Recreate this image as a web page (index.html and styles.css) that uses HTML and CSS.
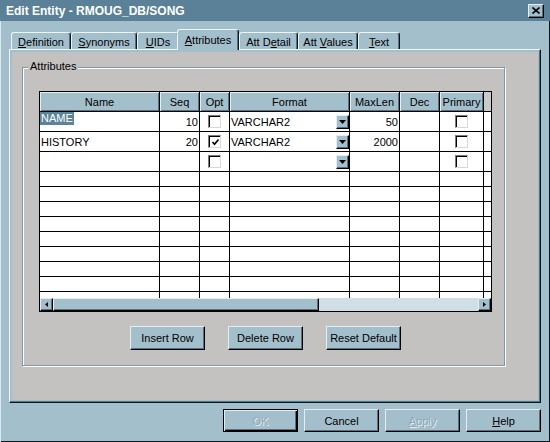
FILE: index.html
```html
<!DOCTYPE html>
<html>
<head>
<meta charset="utf-8">
<title>Edit Entity</title>
<link rel="stylesheet" href="styles.css">
</head>
<body>
<div class="window">
  <div class="titlebar">
    <span class="title">Edit Entity - RMOUG_DB/SONG</span>
    <div class="close"><svg width="8" height="7" viewBox="0 0 8 7"><path d="M0.5 0.5 L7.5 6.5 M7.5 0.5 L0.5 6.5" stroke="#000" stroke-width="1.6" fill="none"/></svg></div>
  </div>
  <div class="body">
    <div class="tabs">
      <div class="tab t-def"><span><u>D</u>efinition</span></div>
      <div class="tab t-syn"><span><u>S</u>ynonyms</span></div>
      <div class="tab t-uid"><span><u>U</u>IDs</span></div>
      <div class="tab t-att active"><span><u>A</u>ttributes</span></div>
      <div class="tab t-det"><span>Att D<u>e</u>tail</span></div>
      <div class="tab t-val"><span>Att <u>V</u>alues</span></div>
      <div class="tab t-txt"><span><u>T</u>ext</span></div>
    </div>
    <div class="panel">
      <div class="page">
        <div class="group">
          <span class="group-label">Attributes</span>
          <div class="grid-frame">
            <div class="grid-clip">
              <div class="grid">
                <div class="hd">Name</div><div class="hd">Seq</div><div class="hd">Opt</div><div class="hd">Format</div><div class="hd">MaxLen</div><div class="hd">Dec</div><div class="hd">Primary</div><div class="hd-fill"></div>

                <div class="c c-name c-edit"><span class="sel">NAME</span></div><div class="c num">10</div><div class="c mid"><span class="cb"></span></div><div class="c fmt"><span>VARCHAR2</span><span class="dd"><svg width="7" height="4" viewBox="0 0 7 4"><path d="M0 0 H7 L3.5 4 Z" fill="#000"/></svg></span></div><div class="c num">50</div><div class="c"></div><div class="c mid"><span class="cb"></span></div><div class="c"></div>

                <div class="c c-name">HISTORY</div><div class="c num">20</div><div class="c mid"><span class="cb"><svg width="9" height="9" viewBox="0 0 9 9"><path d="M1.5 4 L3.5 6.2 L7.5 1.5" stroke="#000" stroke-width="1.7" fill="none"/></svg></span></div><div class="c fmt"><span>VARCHAR2</span><span class="dd"><svg width="7" height="4" viewBox="0 0 7 4"><path d="M0 0 H7 L3.5 4 Z" fill="#000"/></svg></span></div><div class="c num">2000</div><div class="c"></div><div class="c mid"><span class="cb"></span></div><div class="c"></div>

                <div class="c"></div><div class="c"></div><div class="c mid"><span class="cb"></span></div><div class="c fmt"><span></span><span class="dd"><svg width="7" height="4" viewBox="0 0 7 4"><path d="M0 0 H7 L3.5 4 Z" fill="#000"/></svg></span></div><div class="c"></div><div class="c"></div><div class="c mid"><span class="cb"></span></div><div class="c"></div>

                <div class="c"></div><div class="c"></div><div class="c"></div><div class="c"></div><div class="c"></div><div class="c"></div><div class="c"></div><div class="c"></div>
                <div class="c"></div><div class="c"></div><div class="c"></div><div class="c"></div><div class="c"></div><div class="c"></div><div class="c"></div><div class="c"></div>
                <div class="c"></div><div class="c"></div><div class="c"></div><div class="c"></div><div class="c"></div><div class="c"></div><div class="c"></div><div class="c"></div>
                <div class="c"></div><div class="c"></div><div class="c"></div><div class="c"></div><div class="c"></div><div class="c"></div><div class="c"></div><div class="c"></div>
                <div class="c"></div><div class="c"></div><div class="c"></div><div class="c"></div><div class="c"></div><div class="c"></div><div class="c"></div><div class="c"></div>
                <div class="c"></div><div class="c"></div><div class="c"></div><div class="c"></div><div class="c"></div><div class="c"></div><div class="c"></div><div class="c"></div>
                <div class="c"></div><div class="c"></div><div class="c"></div><div class="c"></div><div class="c"></div><div class="c"></div><div class="c"></div><div class="c"></div>
                <div class="c"></div><div class="c"></div><div class="c"></div><div class="c"></div><div class="c"></div><div class="c"></div><div class="c"></div><div class="c"></div>
                <div class="c"></div><div class="c"></div><div class="c"></div><div class="c"></div><div class="c"></div><div class="c"></div><div class="c"></div><div class="c"></div>
                <div class="c"></div><div class="c"></div><div class="c"></div><div class="c"></div><div class="c"></div><div class="c"></div><div class="c"></div><div class="c"></div>
              </div>
            </div>
            <div class="hscroll">
              <div class="sb-btn"><svg width="3" height="5" viewBox="0 0 3 5"><path d="M3 0 V5 L0 2.5 Z" fill="#000"/></svg></div>
              <div class="sb-thumb"></div>
              <div class="sb-track"></div>
              <div class="sb-btn"><svg width="3" height="5" viewBox="0 0 3 5"><path d="M0 0 V5 L3 2.5 Z" fill="#000"/></svg></div>
            </div>
          </div>
          <div class="grid-buttons">
            <div class="btn"><span>Insert Row</span></div>
            <div class="btn"><span>Delete Row</span></div>
            <div class="btn"><span>Reset Default</span></div>
          </div>
        </div>
      </div>
    </div>
    <div class="dialog-buttons">
      <div class="btn dbtn default disabled"><span>OK</span></div>
      <div class="btn dbtn"><span>Cancel</span></div>
      <div class="btn dbtn disabled"><span><u>A</u>pply</span></div>
      <div class="btn dbtn"><span><u>H</u>elp</span></div>
    </div>
  </div>
</div>
</body>
</html>
```

FILE: styles.css
```css
* { box-sizing: border-box; }
html, body { margin: 0; padding: 0; }
body {
  font-family: "Liberation Sans", Arial, sans-serif;
  font-size: 11px;
  color: #000;
  background: #a4bfcc;
}
u { text-decoration: underline; text-underline-offset: 1px; }

.window {
  width: 550px;
  height: 442px;
  background: #a4bfcc;
  box-shadow: inset 1px 0 0 #dce8ee, inset -1px -1px 0 #0b1720;
  display: flex;
  flex-direction: column;
  overflow: hidden;
}

.titlebar {
  height: 21px;
  flex: none;
  background: #5a8198;
  display: flex;
  align-items: center;
  justify-content: space-between;
  padding: 0 6px 0 6px;
  color: #fff;
}
.title { font-weight: bold; font-size: 12px; letter-spacing: 0; }
.close {
  width: 16px;
  height: 14px;
  background: #a4bfcc;
  border: 1px solid;
  border-color: #e3edf2 #000 #000 #e3edf2;
  box-shadow: inset -1px -1px 0 #56717f;
  display: flex;
  align-items: center;
  justify-content: center;
}
.close svg { display: block; }

.body {
  flex: 1;
  display: flex;
  flex-direction: column;
  padding: 0 9px 0 9px;
}

.tabs {
  margin-top: 8px;
  height: 20px;
  display: flex;
  align-items: flex-end;
  padding-left: 2px;
  position: relative;
  z-index: 2;
}
.tab {
  height: 17px;
  background: #a4bfcc;
  border-top: 1px solid #eef4f7;
  border-left: 1px solid #eef4f7;
  border-right: 1px solid #0b1720;
  box-shadow: inset -1px 0 0 #56717f;
  border-radius: 3px 3px 0 0;
  display: flex;
  align-items: center;
  justify-content: center;
  padding-top: 1px;
  white-space: nowrap;
}
.tab.active {
  height: 21px;
  margin-bottom: -1px;
  margin-left: -2px;
  padding-bottom: 2px;
}
.t-def { width: 60px; }
.t-syn { width: 66px; }
.t-uid { width: 42px; }
.t-att { width: 62px; }
.t-det { width: 59px; }
.t-val { width: 60px; }
.t-txt { width: 42px; }

.panel {
  height: 354px;
  flex: none;
  background: #a4bfcc;
  border: 1px solid;
  border-color: #eef4f7 #0b1720 #0b1720 #eef4f7;
  box-shadow: inset -1px -1px 0 #56717f;
  padding: 2px;
  position: relative;
  z-index: 1;
}
.page {
  height: 100%;
  background: #c4c2c0;
  padding: 15px 0 0 10px;
}

.group {
  position: relative;
  width: 483px;
  border: 1px solid #7e99a8;
  box-shadow: inset 1px 1px 0 #fff, 1px 1px 0 #fff;
  padding: 23px 0 15px 16px;
}
.group-label {
  position: absolute;
  top: -8px;
  left: 5px;
  background: #c4c2c0;
  padding: 0 2px;
  line-height: 13px;
}

.grid-frame {
  width: 453px;
  height: 221px;
  border: 1px solid #000;
  display: flex;
  flex-direction: column;
}
.grid-clip {
  height: 206px;
  overflow: hidden;
  background: #000;
}
.grid {
  display: grid;
  grid-template-columns: 119px 39px 29px 119px 49px 39px 43px 7px;
  grid-template-rows: 19px 19px 19px 19px repeat(10, 14px);
  gap: 1px;
  background: #000;
}
.hd {
  background: #a4bfcc;
  box-shadow: inset 1px 1px 0 #e3edf2, inset -1px -1px 0 #56717f;
  display: flex;
  align-items: center;
  justify-content: center;
  padding-top: 1px;
}
.hd-fill { background: #cbcac8; }
.c {
  background: #fff;
  display: flex;
  align-items: center;
  white-space: nowrap;
  overflow: hidden;
}
.c-name { padding-left: 1px; }
.c-edit { align-items: flex-start; padding-left: 0; }
.sel {
  background: #5d8399;
  color: #fff;
  padding: 0 1px;
  line-height: 13px;
}
.num { justify-content: flex-end; padding-right: 1px; }
.mid { justify-content: center; }
.fmt { justify-content: space-between; padding-left: 1px; }

.cb {
  width: 13px;
  height: 13px;
  background: #fff;
  border: 1px solid;
  border-color: #7b7b7b #d8d8d8 #d8d8d8 #7b7b7b;
  box-shadow: inset 1px 1px 0 #000;
  display: flex;
  align-items: center;
  justify-content: center;
  padding: 1px 0 0 1px;
}
.cb svg { display: block; }

.dd {
  width: 13px;
  height: 14px;
  background: #a4bfcc;
  border: 1px solid;
  border-color: #e3edf2 #000 #000 #e3edf2;
  box-shadow: inset -1px -1px 0 #56717f;
  display: flex;
  align-items: center;
  justify-content: center;
}
.dd svg { display: block; }

.hscroll {
  height: 13px;
  display: flex;
  background: #d0dfe6;
}
.sb-btn {
  width: 13px;
  height: 13px;
  background: #a4bfcc;
  border: 1px solid;
  border-color: #e3edf2 #000 #000 #e3edf2;
  box-shadow: inset -1px -1px 0 #56717f;
  display: flex;
  align-items: center;
  justify-content: center;
}
.sb-btn svg { display: block; }
.sb-thumb {
  width: 266px;
  height: 13px;
  background: #a4bfcc;
  border: 1px solid;
  border-color: #e3edf2 #000 #000 #e3edf2;
  box-shadow: inset -1px -1px 0 #56717f;
}
.sb-track { flex: 1; }

.grid-buttons {
  width: 453px;
  margin-top: 14px;
  display: flex;
  justify-content: center;
  gap: 23px;
}
.btn {
  width: 75px;
  height: 24px;
  background: #a4bfcc;
  border: 1px solid;
  border-color: #e3edf2 #000 #000 #e3edf2;
  box-shadow: inset -1px -1px 0 #56717f;
  display: flex;
  align-items: center;
  justify-content: center;
  font-size: 11px;
  white-space: nowrap;
}

.dialog-buttons {
  margin-top: 6px;
  display: flex;
  justify-content: flex-end;
  gap: 6px;
}
.dbtn { height: 23px; }
.default {
  border: 1px solid #000;
  box-shadow: inset 1px 1px 0 #e3edf2, inset -1px -1px 0 #000, inset -2px -2px 0 #56717f;
}
.disabled {
  color: #8fa8b5;
  text-shadow: 1px 1px 0 #e6eef2;
}
```
